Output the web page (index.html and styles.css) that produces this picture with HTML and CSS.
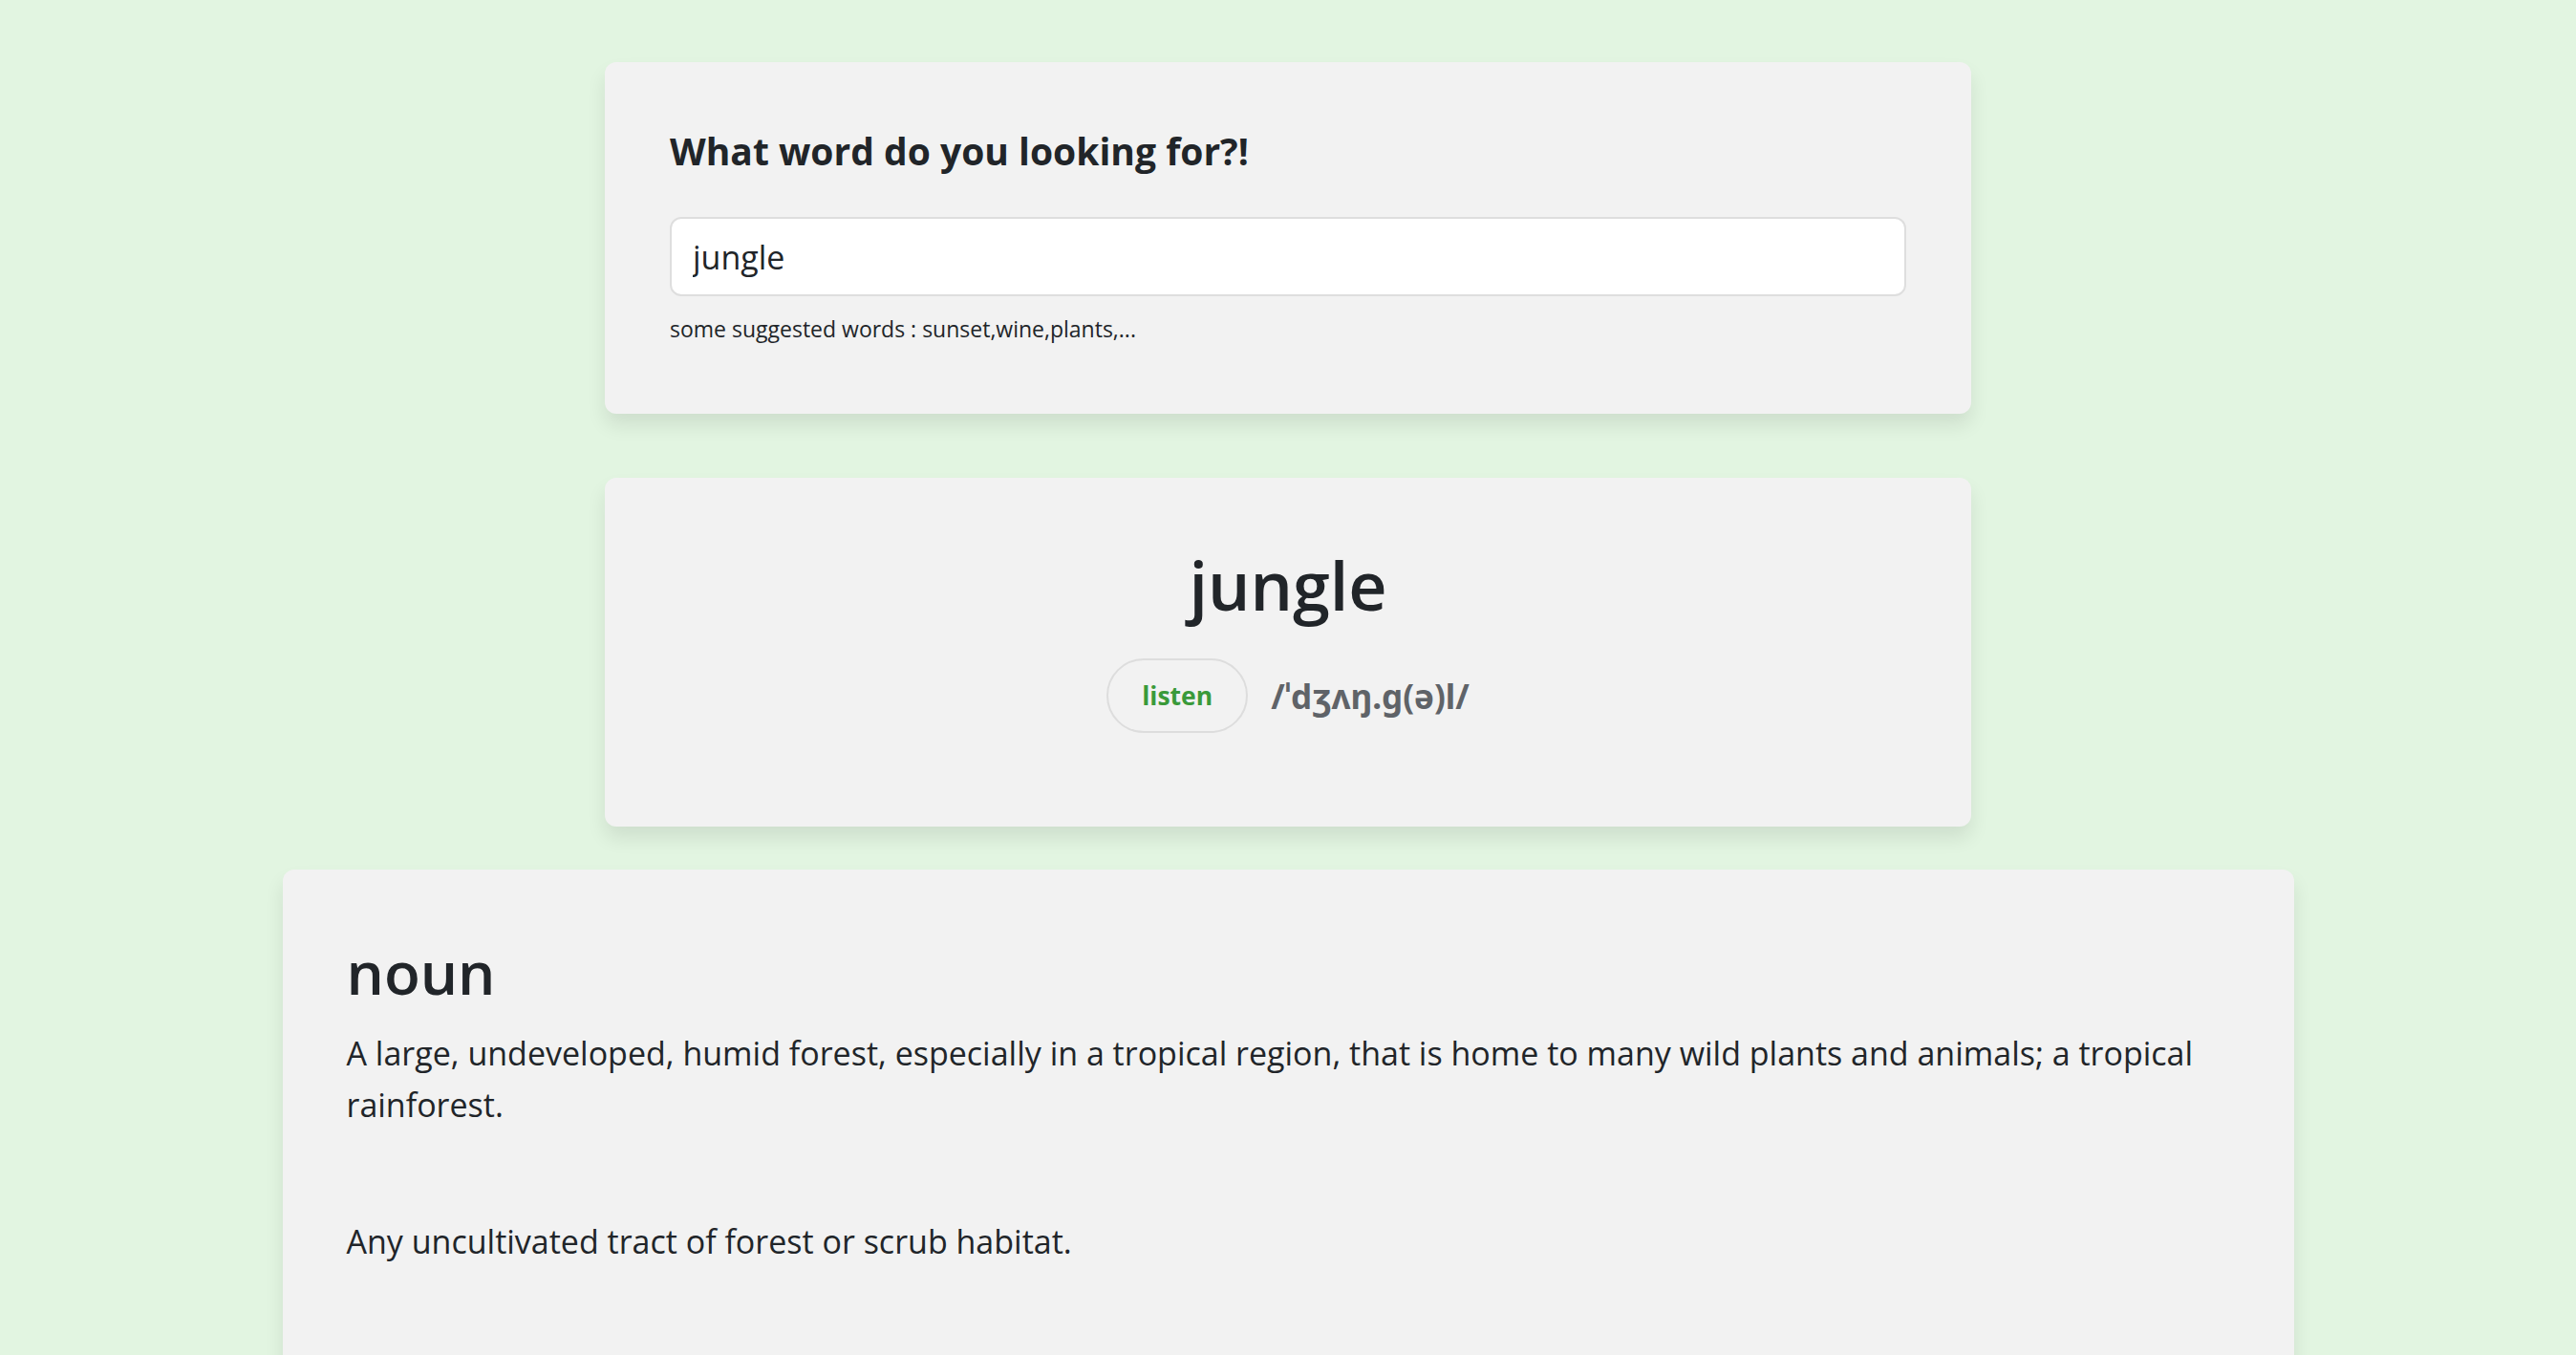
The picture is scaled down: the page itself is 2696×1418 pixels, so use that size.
FILE: index.html
```html
<!DOCTYPE html>
<html lang="en">
<head>
<meta charset="utf-8">
<title>Dictionary</title>
<link rel="stylesheet" href="styles.css">
</head>
<body>
<main class="page">
  <section class="card search-card">
    <h4 class="search-title">What word do you looking for?!</h4>
    <input class="search-input" type="text" value="jungle">
    <p class="hint">some suggested words : sunset,wine,plants,...</p>
  </section>

  <section class="card word-card">
    <h1 class="word">jungle</h1>
    <div class="pron">
      <button class="listen" type="button">listen</button>
      <span class="phonetic">/ˈdʒʌŋ.ɡ(ə)l/</span>
    </div>
  </section>

  <section class="card meaning-card">
    <h2 class="pos">noun</h2>
    <p class="definition">A large, undeveloped, humid forest, especially in a tropical region, that is home to many wild plants and animals; a tropical rainforest.</p>
    <p class="definition">Any uncultivated tract of forest or scrub habitat.</p>
  </section>
</main>
</body>
</html>
```
FILE: styles.css
```css
html, body {
  margin: 0;
  padding: 0;
}
body {
  background: #e2f5e1;
  color: #212529;
  font-family: "Open Sans", "Noto Sans", sans-serif;
}
.page {
  display: flex;
  flex-direction: column;
  align-items: center;
  padding-top: 65px;
}
.card {
  box-sizing: border-box;
  background: #f2f2f2;
  border-radius: 12px;
  box-shadow: 0 12px 20px rgba(0, 0, 0, 0.09);
}
.search-card {
  width: 1430px;
  height: 368px;
  padding: 69px 68px 0;
  display: flex;
  flex-direction: column;
}
.search-title {
  margin: 0;
  font-size: 39px;
  font-weight: 700;
  line-height: 47px;
}
.search-input {
  box-sizing: border-box;
  margin-top: 46px;
  width: 100%;
  height: 83px;
  border: 2px solid #dedede;
  border-radius: 12px;
  background: #fff;
  padding: 0 22px;
  font-family: "Open Sans", "Noto Sans", sans-serif;
  font-size: 34px;
  color: #212529;
  outline: none;
}
.hint {
  margin: 17px 0 0;
  font-size: 23px;
  line-height: 34px;
}
.word-card {
  margin-top: 67px;
  width: 1430px;
  height: 365px;
  padding-top: 68px;
  display: flex;
  flex-direction: column;
  align-items: center;
}
.word {
  margin: 0;
  font-size: 70px;
  font-weight: 600;
  line-height: 88px;
}
.pron {
  margin-top: 33px;
  display: flex;
  align-items: center;
  gap: 24px;
}
.listen {
  box-sizing: border-box;
  height: 78px;
  padding: 0 35px;
  border: 2px solid #dddddd;
  border-radius: 40px;
  background: transparent;
  color: #3a9a3a;
  font-family: "Open Sans", "Noto Sans", sans-serif;
  font-size: 26.5px;
  font-weight: 700;
  cursor: pointer;
}
.phonetic {
  font-family: "Noto Sans", "Open Sans", sans-serif;
  font-size: 35px;
  font-weight: 700;
  color: #5f6368;
}
.meaning-card {
  margin-top: 45px;
  width: 2105px;
  padding: 70px 67px 68px;
}
.pos {
  margin: 0;
  font-size: 62px;
  font-weight: 600;
  line-height: 74px;
}
.definition {
  margin: 22px 0 0;
  font-size: 34px;
  line-height: 53.7px;
}
.definition + .definition {
  margin-top: 90px;
}
.definition:last-child {
  margin-bottom: 90px;
}
```
